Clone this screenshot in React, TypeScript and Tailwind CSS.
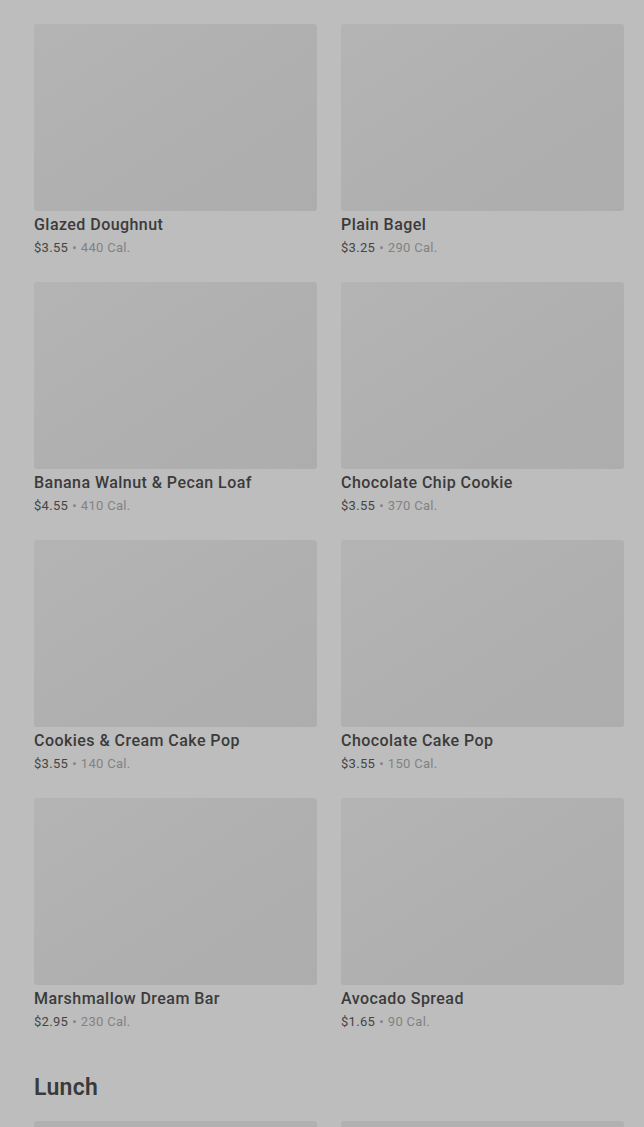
const items = [
  { name: "Glazed Doughnut", price: "$3.55", cal: "440 Cal." },
  { name: "Plain Bagel", price: "$3.25", cal: "290 Cal." },
  { name: "Banana Walnut & Pecan Loaf", price: "$4.55", cal: "410 Cal." },
  { name: "Chocolate Chip Cookie", price: "$3.55", cal: "370 Cal." },
  { name: "Cookies & Cream Cake Pop", price: "$3.55", cal: "140 Cal." },
  { name: "Chocolate Cake Pop", price: "$3.55", cal: "150 Cal." },
  { name: "Marshmallow Dream Bar", price: "$2.95", cal: "230 Cal." },
  { name: "Avocado Spread", price: "$1.65", cal: "90 Cal." },
];

function MenuCard({ name, price, cal }: { name: string; price: string; cal: string }) {
  return (
    <div className="flex flex-col">
      <div className="h-[187px] rounded-[3px] bg-gradient-to-br from-[#b4b4b4] via-[#b0b0b0] to-[#adadad]" />
      <p className="mt-[2px] text-[16px] leading-[24px] font-medium text-[#3b3b3b] tracking-[0.45px]">
        {name}
      </p>
      <p className="text-[13px] leading-[22px] text-[#828282] tracking-[0.3px]">
        <span className="text-[#454545]">{price}</span>
        <span className="mx-[4px]">•</span>
        {cal}
      </p>
    </div>
  );
}

export default function App() {
  return (
    <main
      className="h-[1127px] overflow-hidden bg-[#bdbdbd] pl-[34px] pr-[20px] pt-[24px]"
      style={{ fontFamily: "Roboto, 'Liberation Sans', sans-serif" }}
    >
      <div className="grid grid-cols-2 gap-x-[24px] gap-y-[23px]">
        {items.map((item) => (
          <MenuCard key={item.name} {...item} />
        ))}
      </div>

      <h2 className="mt-[40px] text-[23px] leading-[30px] font-semibold text-[#3a3a3a] tracking-[0.3px]">
        Lunch
      </h2>

      <div className="mt-[18px] grid grid-cols-2 gap-x-[24px]">
        <div className="h-[188px] rounded-[3px] bg-[#b1b1b1]" />
        <div className="h-[188px] rounded-[3px] bg-[#b1b1b1]" />
      </div>
    </main>
  );
}
